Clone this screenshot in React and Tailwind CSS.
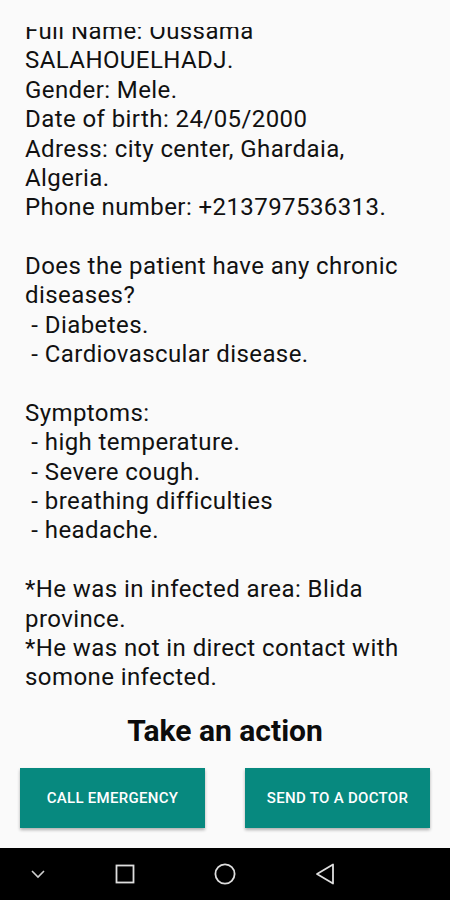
import { useState } from 'react'

const lines = [
  'Full Name: Oussama',
  'SALAHOUELHADJ.',
  'Gender: Mele.',
  'Date of birth: 24/05/2000',
  'Adress: city center, Ghardaia,',
  'Algeria.',
  'Phone number: +213797536313.',
  '',
  'Does the patient have any chronic',
  'diseases?',
  ' - Diabetes.',
  ' - Cardiovascular disease.',
  '',
  'Symptoms:',
  ' - high temperature.',
  ' - Severe cough.',
  ' - breathing difficulties',
  ' - headache.',
  '',
  '*He was in infected area: Blida',
  'province.',
  '*He was not in direct contact with',
  'somone infected.',
]

function NavBar() {
  return (
    <div className="flex h-[52px] shrink-0 items-center bg-black">
      <svg className="ml-[30px]" width="16" height="10" viewBox="0 0 16 10">
        <path d="M2 2 L8 8 L14 2" fill="none" stroke="#cfcfcf" strokeWidth="1.6" />
      </svg>
      <svg className="ml-[69px]" width="20" height="20" viewBox="0 0 20 20">
        <rect x="1.5" y="1.5" width="17" height="17" fill="none" stroke="#dedede" strokeWidth="1.8" />
      </svg>
      <svg className="ml-[79px]" width="22" height="22" viewBox="0 0 22 22">
        <circle cx="11" cy="11" r="9.6" fill="none" stroke="#dedede" strokeWidth="1.8" />
      </svg>
      <svg className="ml-[79px]" width="20" height="22" viewBox="0 0 20 22">
        <path d="M18 1.5 L18 20.5 L2 11 Z" fill="none" stroke="#dedede" strokeWidth="1.8" strokeLinejoin="round" />
      </svg>
    </div>
  )
}

export default function App() {
  const [sent, setSent] = useState(null)

  return (
    <div
      className="relative flex h-[900px] w-[450px] flex-col overflow-hidden bg-[#fafafa]"
      style={{ fontFamily: 'Roboto, "Noto Sans", sans-serif' }}
    >
      <div className="absolute left-0 right-0 top-0 z-10 h-[27px] bg-[#fafafa]" />

      <div className="flex-1 pt-[17px]">
        <div className="pl-[25px] text-[24px] leading-[29.38px] tracking-[0.42px] text-[#111111]">
          {lines.map((line, i) => (
            <div className="h-[29.38px] whitespace-pre" key={i}>
              {line}
            </div>
          ))}
        </div>

        <h1 className="mt-[20px] text-center text-[30px] font-bold leading-[36px] text-[#0c0c0c]">
          Take an action
        </h1>

        <div className="mt-[19px] flex justify-between px-[20px]">
          <button
            className="h-[60px] w-[185px] bg-[#07897f] pt-[2px] text-[15px] font-medium tracking-[0.3px] text-white shadow-[0_2px_3px_rgba(0,0,0,0.3)]"
            onClick={() => setSent('call')}
            type="button"
          >
            CALL EMERGENCY
          </button>
          <button
            className="h-[60px] w-[185px] bg-[#07897f] pt-[2px] text-[15px] font-medium tracking-[0.3px] text-white shadow-[0_2px_3px_rgba(0,0,0,0.3)]"
            onClick={() => setSent('doctor')}
            type="button"
          >
            SEND TO A DOCTOR
          </button>
        </div>
      </div>

      <NavBar />
    </div>
  )
}
